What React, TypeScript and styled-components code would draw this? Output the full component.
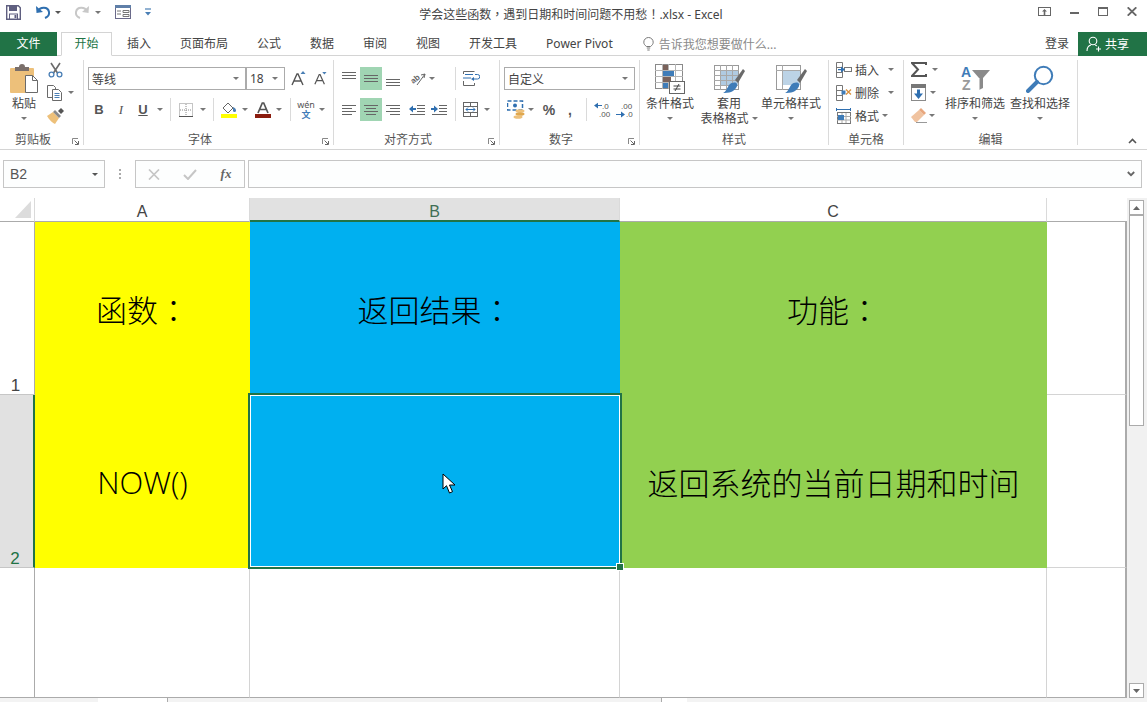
import React from 'react';
import styled, { createGlobalStyle } from 'styled-components';

const UI_FONT = '"Noto Sans", "Noto Sans CJK SC", sans-serif';
const GREEN = '#217346';

const GlobalStyle = createGlobalStyle`
  html, body { margin: 0; padding: 0; background: #fff; }
  body { font-family: ${UI_FONT}; font-size: 12px; color: #444; }
`;

const Window = styled.div`
  width: 1147px;
  height: 702px;
  overflow: hidden;
  display: flex;
  flex-direction: column;
  background: #fff;
`;

// centred full-width punctuation, as the sheet and the title show it
const Punct = styled.span`
  font-family: "Noto Sans CJK TC", sans-serif;
`;

/* title bar */
const TitleBar = styled.div`
  height: 32px;
  flex: none;
  display: grid;
  grid-template-columns: 1fr auto 1fr;
  color: #444;
`;

const Quick = styled.div`
  display: flex;
  align-items: flex-start;
  padding: 4px 0 0 6px;
`;

const QuickSlot = styled.div<{ $w: number }>`
  width: ${p => p.$w}px;
  height: 16px;
  display: flex;
  align-items: center;
`;

const DocTitle = styled.div`
  line-height: 28px;
  font-size: 12px;
  white-space: nowrap;
  padding-right: 5px;
`;

const WindowButtons = styled.div`
  display: flex;
  justify-content: flex-end;
  align-items: flex-start;
  padding: 7px 10px 0 0;
  gap: 19px;
`;

/* tabs */
const TabBar = styled.div`
  height: 24px;
  flex: none;
  box-sizing: border-box;
  display: flex;
  align-items: stretch;
  border-bottom: 1px solid #d4d4d4;
`;

const FileTab = styled.div`
  width: 57px;
  height: 24px;
  margin-right: 4px;
  background: ${GREEN};
  color: #fff;
  text-align: center;
  line-height: 23px;
`;

const ActiveTab = styled.div`
  width: 51px;
  height: 24px;
  box-sizing: border-box;
  border: 1px solid #d4d4d4;
  border-bottom: 1px solid #fff;
  color: ${GREEN};
  background: #fff;
  text-align: center;
  line-height: 22px;
  margin-right: 15px;
`;

const Tab = styled.div`
  margin-right: 29px;
  line-height: 23px;
  white-space: nowrap;
`;

const TellMe = styled.div`
  display: flex;
  align-items: center;
  gap: 5px;
  margin-left: 1px;
  color: #8a8a8a;
  flex: 1;
`;

const SignIn = styled.div`
  line-height: 23px;
  margin-right: 9px;
`;

const ShareButton = styled.div`
  width: 69px;
  height: 24px;
  background: ${GREEN};
  color: #fff;
  display: flex;
  align-items: center;
  padding-left: 8px;
  gap: 3px;
  box-sizing: border-box;
`;

/* ribbon */
const Ribbon = styled.div`
  height: 94px;
  flex: none;
  box-sizing: border-box;
  display: flex;
  padding-top: 4px;
  border-bottom: 1px solid #d4d4d4;
  position: relative;
`;

const Group = styled.div<{ $w: number }>`
  width: ${p => p.$w}px;
  height: 85px;
  flex: none;
  box-sizing: border-box;
  border-right: 1px solid #dadada;
  display: flex;
  flex-direction: column;
  position: relative;
`;

const GroupBody = styled.div<{ $pad?: number }>`
  height: 69px;
  display: flex;
  padding-left: ${p => p.$pad ?? 0}px;
`;

const GroupLabel = styled.div<{ $launch?: boolean }>`
  height: 16px;
  line-height: 22px;
  text-align: center;
  color: #555;
  white-space: nowrap;
  padding-right: ${p => (p.$launch ? 17 : 0)}px;
`;

const Launcher = styled.div`
  position: absolute;
  right: 4px;
  bottom: 0;
  width: 7px;
  height: 7px;
  display: flex;
`;

const Rows = styled.div`
  display: flex;
  flex-direction: column;
  gap: 8px;
  padding-top: 7px;
`;

const Row = styled.div`
  display: flex;
  height: 23px;
  align-items: center;
`;

const Stack = styled.div<{ $w: number }>`
  width: ${p => p.$w}px;
  display: flex;
  flex-direction: column;
  margin-top: -2px;
`;

const StackRow = styled.div`
  height: 23px;
  display: flex;
  align-items: center;
  white-space: nowrap;
`;

const Slot = styled.div<{ $w: number; $on?: boolean }>`
  width: ${p => p.$w}px;
  height: 23px;
  flex: none;
  display: flex;
  align-items: center;
  justify-content: center;
  background: ${p => (p.$on ? '#a0d5b3' : 'transparent')};
`;

const Gap = styled.div<{ $w: number }>`
  width: ${p => p.$w}px;
  flex: none;
`;

const ToolSep = styled.div<{ $l: number; $r: number }>`
  width: 1px;
  height: 23px;
  flex: none;
  background: #dadada;
  margin: 0 ${p => p.$r}px 0 ${p => p.$l}px;
`;

const Caret = styled.span<{ $dark?: boolean }>`
  display: inline-block;
  width: 0;
  height: 0;
  flex: none;
  border-left: 3px solid transparent;
  border-right: 3px solid transparent;
  border-top: 3px solid ${p => (p.$dark ? '#555' : '#777')};
`;

const Combo = styled.div<{ $w: number }>`
  width: ${p => p.$w}px;
  height: 23px;
  flex: none;
  box-sizing: border-box;
  border: 1px solid #ababab;
  display: flex;
  align-items: center;
  justify-content: space-between;
  padding: 0 6px 0 3px;
  font-size: 12px;
  color: #444;
  background: #fff;
`;

const BigTool = styled.div<{ $w: number }>`
  width: ${p => p.$w}px;
  flex: none;
  display: flex;
  flex-direction: column;
  align-items: center;
  line-height: 15px;
  white-space: nowrap;
  margin-top: 4px;
`;

const BigIcon = styled.div`
  height: 30px;
  margin-bottom: 2px;
  display: flex;
  align-items: center;
  justify-content: center;
`;

const BigLine = styled.div`
  height: 15px;
  display: flex;
  align-items: center;
  gap: 3px;
`;

const FaceB = styled.span`
  font: bold 13px "Liberation Sans", sans-serif;
  color: #555;
`;

const FaceI = styled.span`
  font: italic 13px "Liberation Serif", serif;
  color: #555;
`;

const FaceU = styled.span`
  font: bold 13px "Liberation Sans", sans-serif;
  color: #555;
  text-decoration: underline;
`;

const PhoneticBox = styled.div`
  width: 16px;
  display: flex;
  flex-direction: column;
  align-items: center;
  line-height: 10px;
  font-size: 9px;
`;

const PhoneticMark = styled.span`
  color: #555;
`;

const PhoneticChar = styled.span`
  color: #3f7cb8;
  font-weight: 700;
`;

const NumberMark = styled.span<{ $size: number }>`
  font: bold ${p => p.$size}px "Liberation Sans", sans-serif;
  color: #555;
`;

const CollapseMark = styled.div`
  position: absolute;
  right: 10px;
  bottom: 5px;
  display: flex;
`;

/* formula bar */
const FormulaBar = styled.div`
  height: 48px;
  flex: none;
  box-sizing: border-box;
  padding: 10px 5px 10px 3px;
  display: flex;
  align-items: stretch;
`;

const FieldBox = styled.div<{ $w?: number }>`
  ${p => (p.$w ? `width: ${p.$w}px; flex: none;` : 'flex: 1;')}
  box-sizing: border-box;
  border: 1px solid #c6c6c6;
  background: #fdfefe;
  display: flex;
  align-items: center;
`;

const NameText = styled.span`
  flex: 1;
  padding-left: 6px;
  font: 14px "Liberation Sans", sans-serif;
  color: #555;
`;

const GripBox = styled.div`
  width: 30px;
  flex: none;
  display: flex;
  flex-direction: column;
  align-items: center;
  justify-content: center;
  gap: 2px;
`;

const GripDot = styled.i`
  width: 2px;
  height: 2px;
  background: #aaa;
`;

const FnSlot = styled.div`
  width: 36px;
  display: flex;
  justify-content: center;
  align-items: center;
`;

const FxText = styled.span`
  font: italic bold 13px "Liberation Serif", serif;
  color: #666;
`;

/* sheet */
const SheetArea = styled.div`
  height: 500px;
  flex: none;
  display: flex;
`;

const Grid = styled.div`
  width: 1127px;
  flex: none;
  display: grid;
  grid-template-columns: 35px 215px 370px 427px 80px;
  grid-template-rows: 24px 173px 173px 130px;
`;

const Corner = styled.div`
  box-sizing: border-box;
  border-right: 1px solid #dadada;
  border-bottom: 1px solid #ababab;
  display: flex;
  align-items: flex-end;
  justify-content: flex-end;
  padding: 0 3px 3px 0;
`;

const ColHead = styled.div<{ $on?: boolean; $plain?: boolean }>`
  box-sizing: border-box;
  background: ${p => (p.$on ? '#e1e1e1' : '#fff')};
  border-right: ${p => (p.$plain ? 'none' : '1px solid #dadada')};
  border-bottom: ${p => (p.$on ? `2px solid ${GREEN}` : '1px solid #ababab')};
  text-align: center;
  font: 16px/27px "Liberation Sans", sans-serif;
  color: ${p => (p.$on ? '#3f6f55' : '#444')};
`;

const RowHead = styled.div<{ $on?: boolean; $plain?: boolean }>`
  box-sizing: border-box;
  background: ${p => (p.$on ? '#e1e1e1' : '#fff')};
  border-right: ${p => (p.$on ? `2px solid ${GREEN}` : '1px solid #ababab')};
  border-bottom: ${p => (p.$plain ? '1px solid #ababab' : '1px solid #c6c6c6')};
  display: flex;
  align-items: flex-end;
  justify-content: center;
  font: 17px/16px "Liberation Sans", sans-serif;
  color: ${p => (p.$on ? GREEN : '#444')};
  padding-right: 3px;
`;

const Cell = styled.div<{ $fill?: string; $edge?: boolean; $last?: boolean }>`
  position: relative;
  box-sizing: border-box;
  background: ${p => p.$fill ?? '#fff'};
  border-right: ${p => (p.$edge ? '2px solid #ababab' : p.$fill ? 'none' : '1px solid #d4d4d4')};
  border-bottom: ${p => (p.$last ? '1px solid #ababab' : p.$fill ? 'none' : '1px solid #d4d4d4')};
  display: flex;
  align-items: center;
  justify-content: center;
  font-family: "Noto Sans CJK SC", sans-serif;
  font-weight: 300;
  font-size: 31px;
  color: #000;
  white-space: nowrap;
`;

const SelectedFrame = styled.div`
  position: absolute;
  inset: -2px -2px -1px -2px;
  z-index: 2;
  border: 2px solid ${GREEN};
  box-shadow: inset 0 0 0 1px #fff;
  pointer-events: none;
`;

const FillHandle = styled.div`
  position: absolute;
  right: -4px;
  bottom: -3px;
  z-index: 3;
  width: 6px;
  height: 6px;
  background: ${GREEN};
  border: 1px solid #fff;
`;

const Pointer = styled.div`
  position: absolute;
  left: 192px;
  top: 78px;
  display: flex;
`;

const LatinText = styled.span`
  font-family: "Open Sans", sans-serif;
  font-weight: 300;
  font-size: 31px;
`;

const ScrollBar = styled.div`
  flex: 1;
  background: #f1f1f1;
  display: flex;
  flex-direction: column;
  align-items: center;
  padding: 2px 3px 0 2px;
`;

const ScrollButton = styled.div`
  width: 15px;
  height: 15px;
  flex: none;
  box-sizing: border-box;
  background: #fff;
  border: 1px solid #ababab;
  display: flex;
  align-items: center;
  justify-content: center;
`;

const ScrollThumb = styled.div`
  width: 15px;
  height: 211px;
  flex: none;
  box-sizing: border-box;
  background: #fff;
  border: 1px solid #ababab;
`;

const ScrollSpace = styled.div`
  flex: 1;
`;

const StatusStrip = styled.div`
  height: 4px;
  flex: none;
  display: flex;
  background: #f3f3f3;
`;

const StripBox = styled.div<{ $w?: number; $white?: boolean }>`
  ${p => (p.$w ? `width: ${p.$w}px; flex: none;` : 'flex: 1;')}
  box-sizing: border-box;
  background: ${p => (p.$white ? '#fff' : '#f3f3f3')};
`;

const StripBorderBox = styled(StripBox)`
  border-left: 1px solid #ababab;
  border-right: 1px solid #ababab;
`;

/* icons */
const SaveIcon = () => (
  <svg width="15" height="15" viewBox="0 0 15 15">
    <path d="M.7.7h11.6l2 2v11.6H.7z" fill="#fff" stroke="#5f5f80" strokeWidth="1.4" />
    <rect x="3" y="1" width="8" height="5" fill="#5f5f80" />
    <rect x="3.5" y="9" width="8" height="5" fill="#fff" stroke="#5f5f80" />
    <rect x="8.5" y="10" width="2" height="3" fill="#5f5f80" />
  </svg>
);

const UndoIcon = ({ color }: { color: string }) => (
  <svg width="15" height="14" viewBox="0 0 15 14">
    <path d="M3 6.5C5 1.5 13 1.5 14 7c.4 2.5-1.5 5-4 6" fill="none" stroke={color} strokeWidth="2" />
    <path d="M1 1l.5 7 6.5-1z" fill={color} />
  </svg>
);

const RedoIcon = ({ color }: { color: string }) => (
  <svg width="15" height="14" viewBox="0 0 15 14" style={{ transform: 'scaleX(-1)' }}>
    <path d="M3 6.5C5 1.5 13 1.5 14 7c.4 2.5-1.5 5-4 6" fill="none" stroke={color} strokeWidth="2" />
    <path d="M1 1l.5 7 6.5-1z" fill={color} />
  </svg>
);

const FormIcon = () => (
  <svg width="16" height="14" viewBox="0 0 16 14">
    <rect x=".5" y=".5" width="15" height="13" fill="#fff" stroke="#6a6a8a" />
    <rect x="0" y="0" width="16" height="3" fill="#5f7fa8" />
    <path d="M2 6h4M2 9h4M8 5.5h6v2H8zM8 9.5h6v2H8z" fill="none" stroke="#777" />
  </svg>
);

const CustomizeIcon = () => (
  <svg width="6" height="8" viewBox="0 0 6 8">
    <path d="M0 1h6" stroke="#4a7fb5" strokeWidth="1.2" />
    <path d="M0 4h6l-3 3.5z" fill="#4a7fb5" />
  </svg>
);

const RestoreRibbonIcon = () => (
  <svg width="13" height="9" viewBox="0 0 13 9">
    <rect x=".5" y=".5" width="12" height="8" fill="none" stroke="#666" />
    <path d="M6.500 2l-2.500 2.500h1.700v4h1.600v-4H9z" fill="#666" />
  </svg>
);

const MinIcon = () => (
  <svg width="9" height="9" viewBox="0 0 9 9">
    <rect x="0" y="5" width="9" height="2" fill="#666" />
  </svg>
);

const MaxIcon = () => (
  <svg width="10" height="9" viewBox="0 0 10 9">
    <rect x=".5" y=".5" width="9" height="8" fill="none" stroke="#666" />
    <rect x="0" y="0" width="10" height="2" fill="#666" />
  </svg>
);

const CloseIcon = () => (
  <svg width="10" height="9" viewBox="0 0 10 9">
    <path d="M.7.300l8.600 8.400M9.300.300L.7 8.700" stroke="#666" strokeWidth="1.800" />
  </svg>
);

const BulbIcon = () => (
  <svg width="11" height="14" viewBox="0 0 11 14">
    <path d="M3.5 9.5C1.5 8 .8 6.8.8 5.2a4.7 4.7 0 0 1 9.4 0c0 1.6-.7 2.8-2.7 4.3z" fill="none" stroke="#777" />
    <path d="M3.8 11h3.4M4.3 13h2.4" stroke="#777" />
  </svg>
);

const ShareIcon = () => (
  <svg width="16" height="16" viewBox="0 0 16 16">
    <circle cx="7" cy="5" r="3.8" fill="none" stroke="#fff" strokeWidth="1.1" />
    <path d="M1 15c0-3.5 2-5.5 4-6M9 9c.7.2 1.3.5 1.8 1M12.5 10.5v5M10 13h5" fill="none" stroke="#fff" strokeWidth="1.1" />
  </svg>
);

const PasteIcon = () => (
  <svg width="29" height="30" viewBox="0 0 29 30">
    <rect x="0" y="4" width="24" height="25" rx="1" fill="#edc07a" />
    <path d="M5 3h4a3 3 0 0 1 6 0h4v4H5z" fill="#7a6f6a" />
    <path d="M15.5 11.5h7l5 5v12h-12z" fill="#fff" stroke="#6a6a6a" />
    <path d="M22.5 11.5v5h5" fill="none" stroke="#6a6a6a" />
  </svg>
);

const CutIcon = () => (
  <svg width="15" height="16" viewBox="0 0 15 16">
    <path d="M3 1l6.5 10M12 1L5.5 11" stroke="#6a6a6a" strokeWidth="1.6" />
    <circle cx="3.5" cy="12.5" r="2.4" fill="none" stroke="#4a7fb5" strokeWidth="1.3" />
    <circle cx="11.5" cy="12.5" r="2.4" fill="none" stroke="#4a7fb5" strokeWidth="1.3" />
  </svg>
);

const CopyIcon = () => (
  <svg width="15" height="16" viewBox="0 0 15 16">
    <path d="M.5.5h6l2 2v10h-8z" fill="#fff" stroke="#6a6a6a" />
    <path d="M5.5 4.5h6l3 3v8h-9z" fill="#fff" stroke="#6a6a6a" />
    <path d="M7.5 8.5h5M7.5 10.5h5M7.5 12.5h5" stroke="#4a7fb5" />
  </svg>
);

const PainterIcon = () => (
  <svg width="17" height="16" viewBox="0 0 17 16">
    <path d="M0 8l6-4 6 6-4 6C6 15 2 12 0 8z" fill="#edc07a" />
    <path d="M6 4l6 6 2-2-6-6z" fill="#8a8a8a" />
    <path d="M11 3l3-3 3 3-3 3z" fill="#555" />
  </svg>
);

const Launch = () => (
  <Launcher>
    <svg width="7" height="7" viewBox="0 0 7 7">
      <path d="M.5 6V.5H6" fill="none" stroke="#888" />
      <path d="M2.5 2.5L6 6M6.5 3v3.5H3" fill="none" stroke="#666" />
    </svg>
  </Launcher>
);

const GrowIcon = ({ up }: { up: boolean }) => (
  <svg width={up ? 15 : 13} height="15" viewBox="0 0 15 15">
    <path d="M1 14L6 3h1l5 11M3 10h7" fill="none" stroke="#555" strokeWidth="1.4" />
    {up ? <path d="M9.5 3L12 0l2.5 3z" fill="#4a7fb5" /> : <path d="M9.5 0h5L12 3z" fill="#4a7fb5" />}
  </svg>
);

const BorderIcon = () => (
  <svg width="14" height="14" viewBox="0 0 14 14">
    <rect x=".5" y=".5" width="13" height="13" fill="none" stroke="#8a8a8a" strokeDasharray="1 1" />
    <path d="M7 1v12M1 7h12" stroke="#8a8a8a" strokeDasharray="1 1" />
    <path d="M0 13.5h14" stroke="#555" />
  </svg>
);

const FillIcon = () => (
  <svg width="16" height="16" viewBox="0 0 16 16">
    <path d="M2 6l5-5 5 5-5 5z" fill="#fff" stroke="#666" />
    <path d="M12 5c2 1 3 2 3 3.500a1.500 1.500 0 0 1-3 0z" fill="#4a7fb5" />
    <rect x="0" y="12" width="16" height="4" fill="#ffff00" />
  </svg>
);

const FontColorIcon = () => (
  <svg width="16" height="16" viewBox="0 0 16 16">
    <path d="M3 11L7.300 1h1.400L13 11M5 7.500h6" fill="none" stroke="#555" strokeWidth="1.700" />
    <rect x="0" y="12" width="16" height="4" fill="#8a1c0e" />
  </svg>
);

const VerticalAlign = ({ ys }: { ys: number[] }) => (
  <svg width="14" height="14" viewBox="0 0 14 14">
    {ys.map(y => <path key={y} d={`M0 ${y}.5H14`} stroke="#666" />)}
  </svg>
);

const AlignHoriz = ({ kind }: { kind: 'left' | 'center' | 'right' }) => {
  const spans = {
    left: ['M0 1.500h14', 'M0 4.500h10', 'M0 7.500h14', 'M0 10.500h10'],
    center: ['M0 1.500h14', 'M2 4.500h10', 'M0 7.500h14', 'M2 10.500h10'],
    right: ['M0 1.500h14', 'M4 4.500h10', 'M0 7.500h14', 'M4 10.500h10'],
  }[kind];
  return (
    <svg width="14" height="12" viewBox="0 0 14 12">
      {spans.map(d => <path key={d} d={d} stroke="#666" />)}
    </svg>
  );
};

const OrientationIcon = () => (
  <svg width="17" height="16" viewBox="0 0 17 16">
    <text x="2" y="11" fontSize="8" fontFamily="Liberation Sans" fontWeight="bold" fill="#666" transform="rotate(-40 6 9)">ab</text>
    <path d="M8 14L16 3M16 3l-4 1M16 3l-1 4" fill="none" stroke="#666" />
  </svg>
);

const IndentIcon = ({ inc }: { inc: boolean }) => (
  <svg width="16" height="12" viewBox="0 0 16 12">
    <path d="M8 1.500h8M8 4.500h8M8 7.500h8M1 10.500h15" stroke="#666" />
    {inc
      ? <path d="M0 4h3V1.500L7 5 3 8.500V6H0z" fill="#2f6fb0" />
      : <path d="M7 4H4V1.500L0 5l4 3.500V6h3z" fill="#2f6fb0" />}
  </svg>
);

const WrapIcon = () => (
  <svg width="17" height="15" viewBox="0 0 17 15">
    <path d="M.5 3V.5h11M.5 10v4.500h11V12" fill="none" stroke="#666" />
    <path d="M2 3.500h8M0 7h8" stroke="#2f6fb0" />
    <path d="M12 3.500h2.500a2 2 0 0 1 0 4.500H10" fill="none" stroke="#2f6fb0" />
    <path d="M11 6l-3 2 3 2z" fill="#2f6fb0" />
  </svg>
);

const MergeIcon = () => (
  <svg width="15" height="15" viewBox="0 0 15 15">
    <rect x=".5" y=".5" width="14" height="14" fill="#fff" stroke="#666" />
    <path d="M0 4.500h15M0 10.500h15M7.500 0v4M7.500 11v4" stroke="#666" />
    <path d="M3 7.500h9M3 7.500l2-2M3 7.500l2 2M12 7.500l-2-2M12 7.500l-2 2" fill="none" stroke="#2f6fb0" />
  </svg>
);

const AccountingIcon = () => (
  <svg width="18" height="19" viewBox="0 0 18 19">
    <rect x=".5" y="1" width="15" height="9" fill="#fff" stroke="#2f6fb0" strokeWidth="1.500" strokeDasharray="4 2" />
    <circle cx="8" cy="5.500" r="2" fill="#2f6fb0" />
    <ellipse cx="13" cy="11" rx="4.500" ry="1.800" fill="#edc07a" />
    <ellipse cx="13" cy="14" rx="4.500" ry="1.800" fill="#e0a84e" />
    <ellipse cx="11" cy="17" rx="4.500" ry="1.800" fill="#edc07a" />
  </svg>
);

const DecimalIcon = ({ inc }: { inc: boolean }) => (
  <svg width="18" height="16" viewBox="0 0 18 16">
    <text x={inc ? 5 : 8} y="7" fontSize="8" fontFamily="Liberation Sans" fill="#555">{inc ? '.00' : '.0'}</text>
    <text x={inc ? 10 : 5} y="15" fontSize="8" fontFamily="Liberation Sans" fill="#555">{inc ? '.0' : '.00'}</text>
    {inc
      ? <path d="M0 12h5V9.500L9 12.500 5 15.500V13H0z" fill="#2f6fb0" />
      : <path d="M8 3H4V.8L0 3.500l4 3V4h4z" fill="#2f6fb0" />}
  </svg>
);

const CondFormatIcon = () => (
  <svg width="30" height="30" viewBox="0 0 30 30">
    <rect x=".5" y=".5" width="27" height="24" fill="#fff" stroke="#8a8a8a" />
    <path d="M0 6.500h28M0 12.500h28M0 18.500h28M7.500 0v25M13.500 0v25M20.500 0v25" stroke="#b5b5b5" />
    <rect x="8" y="1" width="5" height="5" fill="#7a625a" />
    <rect x="8" y="7" width="11" height="5" fill="#3f7cb8" />
    <rect x="8" y="13" width="8" height="5" fill="#7a625a" />
    <rect x="8" y="19" width="5" height="5" fill="#3f7cb8" />
    <rect x="14.500" y="17.500" width="15" height="12" fill="#fff" stroke="#666" />
    <path d="M18.500 22h7M18.500 25h7M24 20l-4 7" stroke="#444" />
  </svg>
);

const TableStyleIcon = ({ light }: { light?: boolean }) => (
  <svg width="31" height="29" viewBox="0 0 31 29">
    <rect x=".5" y=".5" width="24" height="24" fill="#fff" stroke="#9a9a9a" />
    <rect x="6" y="5" width="18" height="15" fill={light ? '#bcd3e6' : '#b0cbe2'} />
    {!light && <path d="M0 5.500h25M0 10.500h25M0 15.500h25M0 20.500h25M6.500 0v25M12.500 0v25M18.500 0v25" stroke="#a8a8a8" />}
    {light && <path d="M0 5.500h25M6.500 0v25" stroke="#a8a8a8" />}
    <path d="M21 15L29 4l2 2-7 12z" fill="#6a6a6a" />
    <path d="M15 20c3-3 7-3 8-1 1 3-3 7-6 8-2 .7-6 1-8 1 3-1 4-5 6-8z" fill="#3f7cb8" />
  </svg>
);

const InsertCellIcon = () => (
  <svg width="16" height="16" viewBox="0 0 16 16">
    <path d="M.5.5h6v15h-6zM.5 5.500h6M.5 10.500h6" fill="#fff" stroke="#777" />
    <rect x="8.500" y="5.500" width="7" height="4" fill="#fff" stroke="#777" />
    <path d="M0 7.500h3V5L7 8 3 11V8.800H0z" fill="#2f6fb0" transform="translate(2 -.5)" />
  </svg>
);

const DeleteCellIcon = () => (
  <svg width="16" height="16" viewBox="0 0 16 16">
    <path d="M.5.5h6v15h-6zM.5 5.500h6M.5 10.500h6" fill="#fff" stroke="#777" />
    <rect x="5.500" y="5.500" width="4" height="4" fill="#3f7cb8" />
    <path d="M10 4.500l5 5M15 4.500l-5 5" stroke="#d9913f" strokeWidth="1.300" />
  </svg>
);

const FormatCellIcon = () => (
  <svg width="16" height="16" viewBox="0 0 16 16">
    <path d="M0 1.500h15M.5 0v3M14.500 0v3" stroke="#2f6fb0" />
    <rect x="1.500" y="4.500" width="13" height="11" fill="#fff" stroke="#777" />
    <path d="M1 8.500h14M1 12h14M6 5v10M10 5v10" stroke="#aaa" />
    <rect x="2" y="7" width="6" height="5" fill="#3f7cb8" />
  </svg>
);

const SumIcon = () => (
  <svg width="16" height="15" viewBox="0 0 16 15">
    <path d="M15 3V1H1l6 6.500L1 14h14v-2" fill="none" stroke="#555" strokeWidth="2" />
  </svg>
);

const FillDownIcon = () => (
  <svg width="15" height="17" viewBox="0 0 15 17">
    <rect x=".5" y=".5" width="14" height="16" fill="#fff" stroke="#8a8a8a" />
    <rect x="0" y="0" width="15" height="4" fill="#777" />
    <path d="M6 5.500h3v4h3L7.500 15 3 9.500h3z" fill="#2f6fb0" />
  </svg>
);

const ClearIcon = () => (
  <svg width="16" height="15" viewBox="0 0 16 15">
    <path d="M0 9l8-7 5 5-7 7H4z" fill="#f0c3a0" />
    <path d="M8 2l2-2 5 5-2 2z" fill="#e8a77e" />
    <path d="M5 14.500h11" stroke="#999" />
  </svg>
);

const SortIcon = () => (
  <svg width="31" height="32" viewBox="0 0 31 32">
    <text x="1" y="14" fontSize="14" fontWeight="bold" fontFamily="Liberation Sans" fill="#3f7cb8">A</text>
    <text x="2" y="27" fontSize="14" fontWeight="bold" fontFamily="Liberation Sans" fill="#9a9a9a">Z</text>
    <path d="M12 7h18l-7 8v10l-4 2V15z" fill="#8a8a8a" />
    <path d="M19 15v12" stroke="#fff" />
  </svg>
);

const FindIcon = () => (
  <svg width="28" height="28" viewBox="0 0 28 28">
    <circle cx="17.500" cy="10.500" r="8.700" fill="#fff" stroke="#3f7cb8" strokeWidth="2" />
    <path d="M11 17L2 26" stroke="#3f7cb8" strokeWidth="4" strokeLinecap="round" />
  </svg>
);

const ChevronUp = () => (
  <svg width="9" height="6" viewBox="0 0 9 6">
    <path d="M1 5l3.500-3.500L8 5" fill="none" stroke="#555" strokeWidth="1.600" />
  </svg>
);

const CrossMark = () => (
  <svg width="12" height="11" viewBox="0 0 12 11">
    <path d="M1 .5l10 10M11 .5l-10 10" stroke="#c6c6c6" strokeWidth="1.700" />
  </svg>
);

const CheckMark = () => (
  <svg width="14" height="11" viewBox="0 0 14 11">
    <path d="M1 6l4 4 8-9" fill="none" stroke="#c6c6c6" strokeWidth="2" />
  </svg>
);

const ChevronDown = () => (
  <svg width="8" height="6" viewBox="0 0 8 6">
    <path d="M.8 1l3.200 3.200L7.200 1" fill="none" stroke="#666" strokeWidth="1.800" />
  </svg>
);

const CornerTriangle = () => (
  <svg width="16" height="17" viewBox="0 0 16 17">
    <path d="M16 0v17H0z" fill="#dcdcdc" />
  </svg>
);

const ArrowUp = () => (
  <svg width="7" height="4" viewBox="0 0 7 4"><path d="M0 4l3.500-4L7 4z" fill="#666" /></svg>
);

const ArrowDown = () => (
  <svg width="7" height="4" viewBox="0 0 7 4"><path d="M0 0h7L3.500 4z" fill="#666" /></svg>
);

const CursorIcon = () => (
  <svg width="14" height="21" viewBox="0 0 14 21">
    <path d="M1 1v15l3.500-3.300L7.500 20l3-1.300-3-6.700H13z" fill="#fff" stroke="#000" strokeWidth="1" />
  </svg>
);

const tabs = ['插入', '页面布局', '公式', '数据', '审阅', '视图', '开发工具', 'Power Pivot'];

export default function App() {
  return (
    <Window>
      <GlobalStyle />
      <TitleBar>
        <Quick>
          <QuickSlot $w={29}><SaveIcon /></QuickSlot>
          <QuickSlot $w={20}><UndoIcon color="#2f6fb0" /></QuickSlot>
          <QuickSlot $w={20}><Caret $dark /></QuickSlot>
          <QuickSlot $w={20}><RedoIcon color="#c8c8c8" /></QuickSlot>
          <QuickSlot $w={20}><Caret /></QuickSlot>
          <QuickSlot $w={30}><FormIcon /></QuickSlot>
          <QuickSlot $w={10}><CustomizeIcon /></QuickSlot>
        </Quick>
        <DocTitle>学会这些函数<Punct>，</Punct>遇到日期和时间问题不用愁<Punct>！</Punct>.xlsx - Excel</DocTitle>
        <WindowButtons>
          <RestoreRibbonIcon />
          <MinIcon />
          <MaxIcon />
          <CloseIcon />
        </WindowButtons>
      </TitleBar>

      <TabBar>
        <FileTab>文件</FileTab>
        <ActiveTab>开始</ActiveTab>
        {tabs.map(t => <Tab key={t}>{t}</Tab>)}
        <TellMe><BulbIcon />告诉我您想要做什么...</TellMe>
        <SignIn>登录</SignIn>
        <ShareButton><ShareIcon />共享</ShareButton>
      </TabBar>

      <Ribbon>
        <Group $w={84}>
          <GroupBody $pad={6}>
            <BigTool $w={36}>
              <BigIcon><PasteIcon /></BigIcon>
              <BigLine>粘贴</BigLine>
              <BigLine><Caret /></BigLine>
            </BigTool>
            <Stack $w={36}>
              <StackRow><Gap $w={6} /><CutIcon /></StackRow>
              <StackRow><Gap $w={5} /><CopyIcon /><Gap $w={6} /><Caret /></StackRow>
              <StackRow><Gap $w={5} /><PainterIcon /></StackRow>
            </Stack>
          </GroupBody>
          <GroupLabel $launch>剪贴板</GroupLabel>
          <Launch />
        </Group>

        <Group $w={250}>
          <GroupBody $pad={4}>
            <Rows>
              <Row>
                <Combo $w={158}>等线<Caret /></Combo>
                <Combo $w={39}>18<Caret /></Combo>
                <Gap $w={6} />
                <GrowIcon up />
                <Gap $w={8} />
                <GrowIcon up={false} />
              </Row>
              <Row>
                <Slot $w={22}><FaceB>B</FaceB></Slot>
                <Slot $w={22}><FaceI>I</FaceI></Slot>
                <Slot $w={22}><FaceU>U</FaceU></Slot>
                <Slot $w={11}><Caret /></Slot>
                <ToolSep $l={5} $r={8} />
                <BorderIcon />
                <Slot $w={20}><Caret /></Slot>
                <ToolSep $l={0} $r={7} />
                <FillIcon />
                <Slot $w={16}><Caret /></Slot>
                <Gap $w={2} />
                <FontColorIcon />
                <Slot $w={16}><Caret /></Slot>
                <ToolSep $l={3} $r={7} />
                <PhoneticBox>
                  <PhoneticMark>wén</PhoneticMark>
                  <PhoneticChar>文</PhoneticChar>
                </PhoneticBox>
                <Slot $w={16}><Caret /></Slot>
              </Row>
            </Rows>
          </GroupBody>
          <GroupLabel $launch>字体</GroupLabel>
          <Launch />
        </Group>

        <Group $w={166}>
          <GroupBody $pad={4}>
            <Rows>
              <Row>
                <Slot $w={22}><VerticalAlign ys={[0, 3, 6]} /></Slot>
                <Slot $w={22} $on><VerticalAlign ys={[3, 6, 9]} /></Slot>
                <Slot $w={22}><VerticalAlign ys={[7, 10, 13]} /></Slot>
                <Gap $w={2} />
                <Slot $w={22}><OrientationIcon /></Slot>
                <Slot $w={8}><Caret /></Slot>
                <Gap $w={19} />
                <ToolSep $l={0} $r={7} />
                <WrapIcon />
              </Row>
              <Row>
                <Slot $w={22}><AlignHoriz kind="left" /></Slot>
                <Slot $w={22} $on><AlignHoriz kind="center" /></Slot>
                <Slot $w={22}><AlignHoriz kind="right" /></Slot>
                <Gap $w={2} />
                <Slot $w={22}><IndentIcon inc={false} /></Slot>
                <Slot $w={22}><IndentIcon inc /></Slot>
                <ToolSep $l={5} $r={7} />
                <MergeIcon />
                <Slot $w={18}><Caret /></Slot>
              </Row>
            </Rows>
          </GroupBody>
          <GroupLabel $launch>对齐方式</GroupLabel>
          <Launch />
        </Group>

        <Group $w={140}>
          <GroupBody $pad={4}>
            <Rows>
              <Row><Combo $w={131}>自定义<Caret /></Combo></Row>
              <Row>
                <Gap $w={3} />
                <AccountingIcon />
                <Slot $w={12}><Caret /></Slot>
                <Slot $w={24}><NumberMark $size={14}>%</NumberMark></Slot>
                <Slot $w={18}><NumberMark $size={14}>,</NumberMark></Slot>
                <ToolSep $l={7} $r={7} />
                <DecimalIcon inc={false} />
                <Gap $w={4} />
                <DecimalIcon inc />
              </Row>
            </Rows>
          </GroupBody>
          <GroupLabel $launch>数字</GroupLabel>
          <Launch />
        </Group>

        <Group $w={189}>
          <GroupBody $pad={3}>
            <BigTool $w={54}>
              <BigIcon><CondFormatIcon /></BigIcon>
              <BigLine>条件格式</BigLine>
              <BigLine><Caret /></BigLine>
            </BigTool>
            <BigTool $w={64}>
              <BigIcon><TableStyleIcon /></BigIcon>
              <BigLine>套用</BigLine>
              <BigLine>表格格式<Caret /></BigLine>
            </BigTool>
            <BigTool $w={60}>
              <BigIcon><TableStyleIcon light /></BigIcon>
              <BigLine>单元格样式</BigLine>
              <BigLine><Caret /></BigLine>
            </BigTool>
          </GroupBody>
          <GroupLabel>样式</GroupLabel>
        </Group>

        <Group $w={75}>
          <GroupBody $pad={7}>
            <Stack $w={66}>
              <StackRow><InsertCellIcon /><Gap $w={3} />插入<Gap $w={9} /><Caret /></StackRow>
              <StackRow><DeleteCellIcon /><Gap $w={3} />删除<Gap $w={9} /><Caret /></StackRow>
              <StackRow><FormatCellIcon /><Gap $w={3} />格式<Gap $w={3} /><Caret /></StackRow>
            </Stack>
          </GroupBody>
          <GroupLabel>单元格</GroupLabel>
        </Group>

        <Group $w={174}>
          <GroupBody $pad={7}>
            <Stack $w={32}>
              <StackRow><SumIcon /><Gap $w={5} /><Caret /></StackRow>
              <StackRow><FillDownIcon /><Gap $w={4} /><Caret /></StackRow>
              <StackRow><ClearIcon /><Gap $w={2} /><Caret /></StackRow>
            </Stack>
            <BigTool $w={64}>
              <BigIcon><SortIcon /></BigIcon>
              <BigLine>排序和筛选</BigLine>
              <BigLine><Caret /></BigLine>
            </BigTool>
            <BigTool $w={66}>
              <BigIcon><FindIcon /></BigIcon>
              <BigLine>查找和选择</BigLine>
              <BigLine><Caret /></BigLine>
            </BigTool>
          </GroupBody>
          <GroupLabel>编辑</GroupLabel>
        </Group>
        <CollapseMark><ChevronUp /></CollapseMark>
      </Ribbon>

      <FormulaBar>
        <FieldBox $w={102}>
          <NameText>B2</NameText>
          <Slot $w={18}><Caret $dark /></Slot>
        </FieldBox>
        <GripBox><GripDot /><GripDot /><GripDot /></GripBox>
        <FieldBox $w={110}>
          <FnSlot><CrossMark /></FnSlot>
          <FnSlot><CheckMark /></FnSlot>
          <FnSlot><FxText>fx</FxText></FnSlot>
        </FieldBox>
        <Gap $w={3} />
        <FieldBox>
          <ScrollSpace />
          <Slot $w={20}><ChevronDown /></Slot>
        </FieldBox>
      </FormulaBar>

      <SheetArea>
        <Grid>
          <Corner><CornerTriangle /></Corner>
          <ColHead>A</ColHead>
          <ColHead $on>B</ColHead>
          <ColHead>C</ColHead>
          <ColHead $plain />

          <RowHead>1</RowHead>
          <Cell $fill="#ffff00">函数<Punct>：</Punct></Cell>
          <Cell $fill="#00b0f0">返回结果<Punct>：</Punct></Cell>
          <Cell $fill="#92d050">功能<Punct>：</Punct></Cell>
          <Cell $edge />

          <RowHead $on>2</RowHead>
          <Cell $fill="#ffff00"><LatinText>NOW()</LatinText></Cell>
          <Cell $fill="#00b0f0">
            <SelectedFrame />
            <FillHandle />
            <Pointer><CursorIcon /></Pointer>
          </Cell>
          <Cell $fill="#92d050">返回系统的当前日期和时间</Cell>
          <Cell $edge />

          <RowHead $plain />
          <Cell $last />
          <Cell $last />
          <Cell $last />
          <Cell $edge $last />
        </Grid>
        <ScrollBar>
          <ScrollButton><ArrowUp /></ScrollButton>
          <ScrollThumb />
          <ScrollSpace />
          <ScrollButton><ArrowDown /></ScrollButton>
        </ScrollBar>
      </SheetArea>

      <StatusStrip>
        <StripBox $w={98} />
        <StripBox $w={69} $white />
        <StripBorderBox $w={495} />
        <StripBox $w={25} $white />
        <StripBox />
      </StatusStrip>
    </Window>
  );
}
